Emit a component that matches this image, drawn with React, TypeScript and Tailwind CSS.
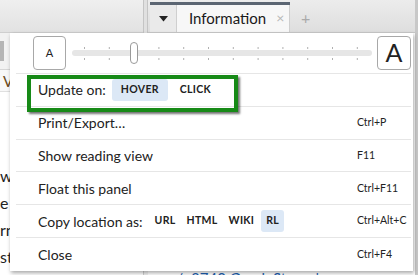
import React from "react";

const ticks = Array.from({ length: 12 }, (_, i) => 12 + i * 24.8);

function Row({ label, shortcut, children, last }: { label: string; shortcut?: string; children?: React.ReactNode; last?: boolean }) {
  return (
    <div className={"ml-[6px] mr-[2px] h-[33px] flex items-center justify-between " + (last ? "" : "border-b border-[#e6e6e6]")}>
      <div className="pl-[22px] flex items-center text-[14px] text-[#222]">
        <span>{label}</span>
        {children}
      </div>
      <div className="w-[54px] text-[10.5px] text-[#222]">{shortcut}</div>
    </div>
  );
}

function Chip({ t, active, wide }: { t: string; active?: boolean; wide?: boolean }) {
  return (
    <span className={(wide ? "px-[9px] " : "px-[5px] ") + "h-[22px] flex items-center rounded-[3px] text-[10.5px] font-bold tracking-[0.03em] text-[#222] " + (active ? "bg-[#dce8f6]" : "")}>
      {t}
    </span>
  );
}

export default function App() {
  return (
    <div className="relative w-[418px] h-[275px] overflow-hidden bg-white" style={{ fontFamily: "Lato, 'Open Sans', sans-serif" }}>
      <div className="flex h-full">
        {/* left pane */}
        <div className="w-[143px] flex flex-col">
          <div className="h-[33px] bg-gradient-to-b from-[#efefef] to-[#e2e2e2] border-b border-[#cfcfcf]" />
          <div className="h-[37px] bg-[#f2f2f2] border-b border-[#d6d6d6] flex items-center">
            <div className="w-[4px] h-[20px] bg-[#b5b5b5]" />
          </div>
          <div className="h-[22px] bg-[#f8f8f8] border-b border-[#e0e0e0] pl-[3px] text-[15px] leading-[22px] text-[#6b4a1a]">V</div>
          <div className="pt-[70px] pl-0 text-[16px] leading-[27px] text-[#222]">
            <div>we</div>
            <div>e <span className="text-[#1d5fb0]">l</span></div>
            <div>rn</div>
            <div>st</div>
          </div>
        </div>
        {/* splitter */}
        <div className="w-[5px] flex flex-col">
          <div className="h-[33px] bg-[#e0e0e0] border-l border-r border-[#c4c4c4]" />
          <div className="flex-1 bg-[#f0f0f0] border-l border-[#d0d0d0]" />
        </div>
        {/* right pane */}
        <div className="flex-1 flex flex-col border-r-[3px] border-[#c8c8c8]">
          <div className="h-[33px] flex bg-gradient-to-b from-[#ececec] to-[#dedede] border-b border-[#c9c9c9]">
            <div className="ml-[2px] w-[27px] flex flex-col">
              <div className="h-[3px] mt-[2px] bg-[#5b6572]" />
              <div className="flex-1 bg-[#eaeaea] border-r border-[#cfcfcf] flex items-center justify-center">
                <svg width="9" height="6" viewBox="0 0 9 6"><path d="M0 0 L9 0 L4.5 5.5 Z" fill="#222" /></svg>
              </div>
            </div>
            <div className="w-[113px] flex flex-col">
              <div className="h-[3px] mt-[2px] bg-[#5b6572]" />
              <div className="flex-1 bg-[#f7f7f7] flex items-center pl-[12px] pb-[1px] border-r border-[#cfcfcf]">
                <span className="text-[15px] text-[#1a1a1a]">Information</span>
                <span className="ml-[10px] text-[14px] text-[#b8b8b8] leading-none">×</span>
              </div>
            </div>
            <div className="pl-[11px] pt-[6px] text-[16px] text-[#aaa]">+</div>
          </div>
          <div className="flex-1 flex flex-col justify-end pb-0">
            <div className="pl-[24px] text-[15px] leading-[15px] h-[4px] overflow-visible text-[#1d5fb0] whitespace-nowrap">‹/› 3740 Greek Strone's</div>
          </div>
        </div>
      </div>

      {/* popup menu */}
      <div className="absolute left-[10px] top-[33px] w-[403px] h-[238px] bg-white shadow-[1px_2px_4px_rgba(0,0,0,0.35)] flex flex-col">
        <div className="h-[41px] flex items-center pl-[17px] ml-[6px] mr-[2px] border-b border-[#e6e6e6]">
          <div className="w-[33px] h-[34px] border border-[#a8a8a8] rounded-[4px] flex items-center justify-center text-[11px] text-[#222]">A</div>
          <svg className="ml-[6px]" width="300" height="34" viewBox="0 0 300 34">
            <rect x="0" y="14" width="300" height="6" rx="3" fill="#e6e6e6" />
            {ticks.map((x, i) => (
              <g key={i}>
                <rect x={x} y="11" width="1" height="2" fill="#b0b0b0" />
                <rect x={x} y="22" width="1" height="2" fill="#b0b0b0" />
              </g>
            ))}
            <rect x="58.5" y="6.5" width="7" height="21" rx="3.5" fill="#fff" stroke="#9a9a9a" />
          </svg>
          <div className="ml-[5px] w-[34px] h-[34px] border border-[#a8a8a8] rounded-[4px] flex items-center justify-center text-[25px] text-[#222]">A</div>
        </div>
        <div className="relative">
          <Row label="Update on:">
            <span className="ml-[6px]" />
            <Chip t="HOVER" active wide />
            <span className="ml-[3px]" />
            <Chip t="CLICK" wide />
          </Row>
          <div className="absolute left-[17px] top-[1px] w-[211px] h-[37px] border-[4px] border-[#178a17] shadow-[2px_2px_2px_rgba(0,0,0,0.55)]" />
        </div>
        <Row label="Print/Export…" shortcut="Ctrl+P" />
        <Row label="Show reading view" shortcut="F11" />
        <Row label="Float this panel" shortcut="Ctrl+F11" />
        <Row label="Copy location as:" shortcut="Ctrl+Alt+C">
          <span className="ml-[7px]" />
          <Chip t="URL" />
          <span className="ml-[1px]" />
          <Chip t="HTML" />
          <span className="ml-[1px]" />
          <Chip t="WIKI" />
          <span className="ml-[2px]" />
          <Chip t="RL" active />
        </Row>
        <Row label="Close" shortcut="Ctrl+F4" last />
      </div>
    </div>
  );
}
